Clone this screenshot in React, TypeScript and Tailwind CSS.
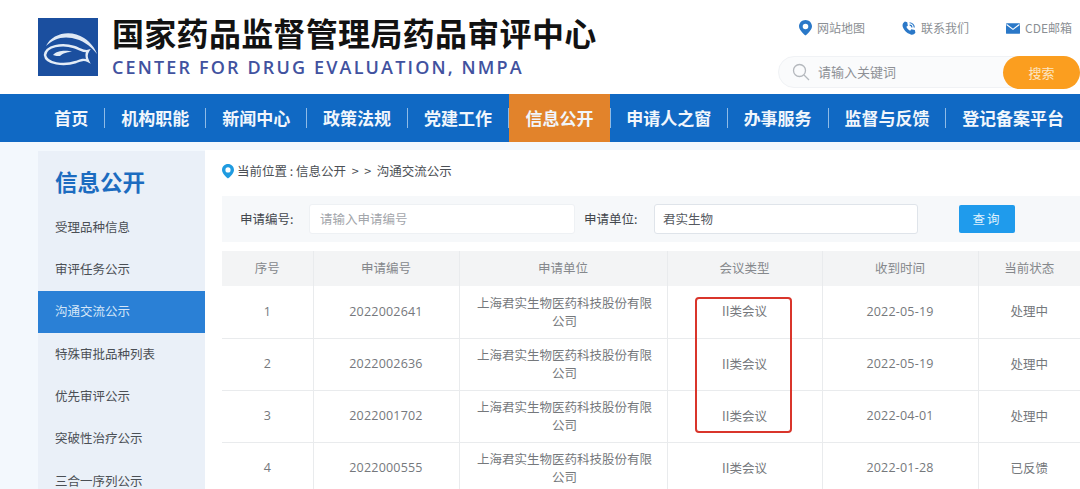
import React from "react";

const font = { fontFamily: '"Noto Sans CJK SC", "Open Sans", sans-serif' };
const latin = { fontFamily: '"Open Sans", sans-serif' };

const navItems = [
  { t: "首页", w: "w-[67px]" },
  { t: "机构职能", w: "w-[101px]" },
  { t: "新闻中心", w: "w-[101px]" },
  { t: "政策法规", w: "w-[101px]" },
  { t: "党建工作", w: "w-[101px]" },
  { t: "信息公开", w: "w-[102px]", active: true },
  { t: "申请人之窗", w: "w-[117px]" },
  { t: "办事服务", w: "w-[101px]" },
  { t: "监督与反馈", w: "w-[118px]" },
  { t: "登记备案平台", w: "w-[135px]" },
];

const sideItems = ["受理品种信息", "审评任务公示", "沟通交流公示", "特殊审批品种列表", "优先审评公示", "突破性治疗公示", "三合一序列公示"];

const rows = [
  ["1", "2022002641", "II类会议", "2022-05-19", "处理中"],
  ["2", "2022002636", "II类会议", "2022-05-19", "处理中"],
  ["3", "2022001702", "II类会议", "2022-04-01", "处理中"],
  ["4", "2022000555", "II类会议", "2022-01-28", "已反馈"],
];

function Logo() {
  return (
    <svg width="60" height="58" viewBox="0 0 60 58" className="shrink-0">
      <rect width="60" height="58" fill="#1b4f9f" />
      <path d="M8 28 C14 15 33 11 46 20 C52 24 57 30 59 36 C52 27 44 22 34 20 C24 18 15 21 8 28 Z" fill="#dfe9f5" />
      <path d="M7 37 C8 28 24 25 36 29 C42 31 46 34 50 33 C48 36 48 39 50 43 C46 41 43 42 38 44 C26 48 8 46 7 37 Z" fill="none" stroke="#e3ecf7" strokeWidth="2.4" />
      <path d="M15 37 C19 32 30 32 34 34 C28 34 24 36 22 38 C20 38 17 38 15 37 Z" fill="#e3ecf7" />
    </svg>
  );
}

function Pin({ color, size = 13 }: { color: string; size?: number }) {
  return (
    <svg width={size} height={size * 1.2} viewBox="0 0 20 24" className="shrink-0">
      <path fillRule="evenodd" d="M10 0C4.5 0 0 4.4 0 9.8 0 16.5 10 24 10 24s10-7.5 10-14.2C20 4.4 15.500 0 10 0Zm0 5.600a4.300 4.300 0 1 1 0 8.600 4.300 4.300 0 0 1 0-8.600Z" fill={color} />
    </svg>
  );
}

function Phone() {
  return (
    <svg width="14" height="14" viewBox="0 0 24 24" className="shrink-0">
      <path d="M5 1 L9 2 L10 8 L7.500 10 C8.500 13 11 15.500 14 16.500 L16 14 L22 15.500 L23 20 C21 23 18 24 15 23 C8 21 2.500 15 1 9 C0.500 6 2 3 5 1 Z" fill="#2a78c8" />
      <path d="M13 3 C17 3 21 7 21 11 M13 7 C15 7 17 9 17 11" stroke="#2a78c8" strokeWidth="2" fill="none" />
    </svg>
  );
}

function Mail() {
  return (
    <svg width="14" height="11" viewBox="0 0 24 18" className="shrink-0">
      <rect width="24" height="18" rx="1.500" fill="#2a78c8" />
      <path d="M1 2 L12 10.500 L23 2" stroke="#fff" strokeWidth="2" fill="none" />
    </svg>
  );
}

function Search() {
  return (
    <svg width="18" height="18" viewBox="0 0 18 18" fill="none" stroke="#b4b8bd" strokeWidth="1.300" className="shrink-0">
      <circle cx="7.500" cy="7.500" r="6" />
      <path d="M12 12 L17 17" />
    </svg>
  );
}

export default function App() {
  return (
    <div style={font} className="w-[1080px] h-[489px] overflow-hidden bg-white relative">
      {/* Header */}
      <header className="h-[94px] flex bg-white">
        <div className="pl-[38px] pt-[18px]"><Logo /></div>
        <div className="pl-[14px] pt-[10px] w-[680px]">
          <div className="text-[32px] leading-[44px] font-bold text-[#121212] whitespace-nowrap tracking-[0.3px]">国家药品监督管理局药品审评中心</div>
          <div className="text-[18px] leading-[22px] mt-[2px] font-semibold text-[#41529f] whitespace-nowrap tracking-[2.15px]" style={latin}>CENTER FOR DRUG EVALUATION, NMPA</div>
        </div>
        <div className="flex-1 flex flex-col items-end">
          <div className="flex items-center w-full pl-[21px] pt-[20px] text-[12px] leading-[16px] text-[#8b8f94] whitespace-nowrap">
            <span className="flex items-center gap-[5px] w-[103px]"><Pin color="#2a78c8" /><span>网站地图</span></span>
            <span className="flex items-center gap-[5px] w-[104px]"><Phone /><span>联系我们</span></span>
            <span className="flex items-center gap-[5px]"><Mail /><span>CDE邮箱</span></span>
          </div>
          <div className="mt-[20px] w-[302px] h-[32px] rounded-full bg-[#fafbfc] border border-[#f0f2f5] flex items-center relative">
            <span className="ml-[13px]"><Search /></span>
            <span className="ml-[8px] text-[13px] text-[#8d9095]">请输入关键词</span>
            <span className="absolute right-[-1px] top-[-1px] w-[77px] h-[33px] rounded-full bg-[#fb9e1f] flex items-center justify-center text-[13px] text-[#fbe6c4]">搜索</span>
          </div>
        </div>
      </header>

      {/* Nav */}
      <nav className="h-[48px] bg-[#1069c4] flex items-center pl-[38px] whitespace-nowrap">
        {navItems.map((n, i) => (
          <React.Fragment key={n.t}>
            <div className={`${n.w} h-[48px] flex items-center justify-center text-[17px] font-bold text-[#f1f6fc] ${n.active ? "bg-[#e2832b]" : ""}`}>{n.t}</div>
            {i < navItems.length - 1 && <div className="w-px h-[20px] bg-[#8fbbe6]" />}
          </React.Fragment>
        ))}
      </nav>

      {/* Body */}
      <div className="bg-[#f3f8fd] h-[347px] pl-[38px] pt-[8px] flex">
        <aside className="w-[167px] h-[340px] mt-[1px] bg-[#eaf0f8] shrink-0 overflow-hidden">
          <div className="pl-[17px] pt-[14px] pb-[9px] text-[22.500px] leading-[32px] font-bold text-[#1c6cc0]">信息公开</div>
          {sideItems.map((s, i) => (
            <div key={s} className={`h-[42.300px] flex items-center pl-[17px] text-[12.500px] ${i === 2 ? "bg-[#2a80d6] text-[#d5e6f8]" : "text-[#4a4f55]"}`}>{s}</div>
          ))}
        </aside>

        <main className="flex-1 bg-white pl-[17px] h-[340px]">
          <div className="h-[46px] pb-[3px] flex items-center text-[12.500px] text-[#4b4f55] whitespace-pre">
            <span className="mr-[3px]"><Pin color="#1f9be0" size={12} /></span>
            当前位置 : 信息公开  &gt;  &gt;  沟通交流公示
          </div>
          <div className="h-[46px] w-[858px] bg-[#f6f8fa] flex items-center text-[12.500px] text-[#43474d] whitespace-nowrap">
            <span className="pl-[18px] w-[87px]">申请编号:</span>
            <div className="w-[266px] h-[30px] bg-white rounded-[3px] border border-[#eef1f4] flex items-center pl-[10px] text-[#a3a6ab]">请输入申请编号</div>
            <span className="ml-[9px] w-[70px]">申请单位:</span>
            <div className="w-[264px] h-[30px] bg-white rounded-[3px] border border-[#dfe4ea] flex items-center pl-[8px] text-[#55595f]">君实生物</div>
            <div className="ml-[41px] w-[56px] h-[28px] bg-[#1f9bec] rounded-[2px] flex items-center justify-center text-[#dff1fd] tracking-[2px]">查询</div>
          </div>

          <table className="mt-[9px] w-[858px] table-fixed border-collapse text-[12.500px] text-center">
            <colgroup>
              <col className="w-[91px]" />
              <col className="w-[146px]" />
              <col className="w-[208px]" />
              <col className="w-[155px]" />
              <col className="w-[156px]" />
              <col className="w-[102px]" />
            </colgroup>
            <thead>
              <tr className="h-[35px] bg-[#f3f4f5] text-[#85888c]">
                {["序号", "申请编号", "申请单位", "会议类型", "收到时间", "当前状态"].map((h) => (
                  <th key={h} className="font-normal border-r border-[#e9ebed] last:border-r-0">{h}</th>
                ))}
              </tr>
            </thead>
            <tbody>
              {rows.map((r) => (
                <tr key={r[0]} className="h-[52px] border-b border-[#e9ebed] text-[#75787c]">
                  <td className="border-r border-[#e9ebed] pt-[1px]" style={latin}>{r[0]}</td>
                  <td className="border-r border-[#e9ebed] pt-[1px] tracking-[0.2px]" style={latin}>{r[1]}</td>
                  <td className="border-r border-[#e9ebed] pl-[17px] pr-[14px] leading-[18px]">上海君实生物医药科技股份有限公司</td>
                  <td className="border-r border-[#e9ebed]">{r[2]}</td>
                  <td className="border-r border-[#e9ebed] pt-[1px] tracking-[0.2px]" style={latin}>{r[3]}</td>
                  <td>{r[4]}</td>
                </tr>
              ))}
            </tbody>
          </table>
        </main>
      </div>

      {/* Annotation */}
      <div className="absolute left-[695px] top-[297px] w-[97px] h-[136px] border-[2.500px] border-[#d9352b] rounded-[4px]" />
    </div>
  );
}
